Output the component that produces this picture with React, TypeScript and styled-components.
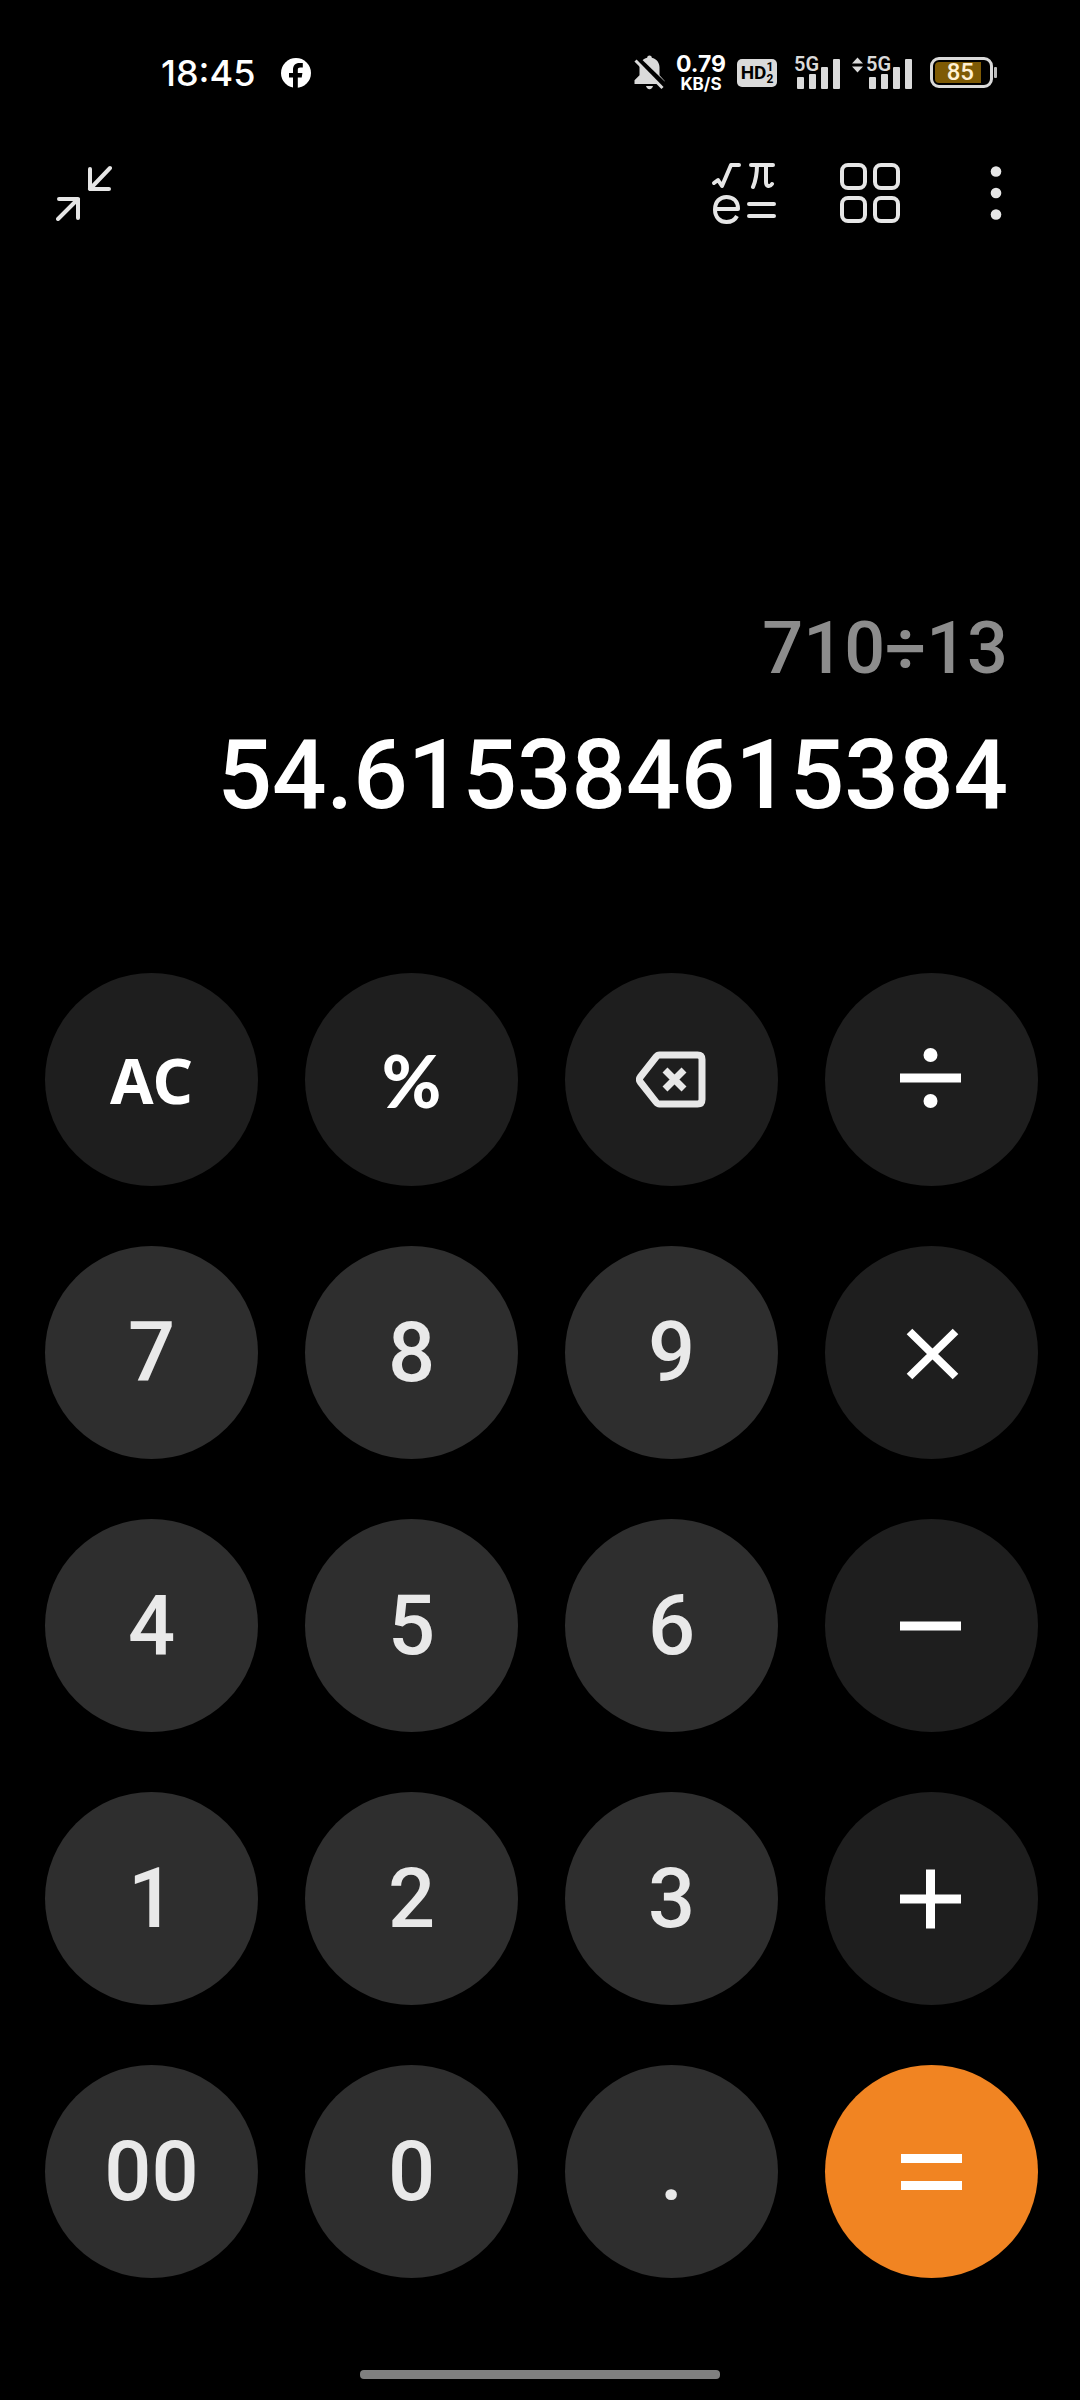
import React from 'react';
import styled, { createGlobalStyle } from 'styled-components';

const GlobalStyle = createGlobalStyle`
  *, *::before, *::after { box-sizing: border-box; }
  body {
    margin: 0;
    background: #000;
    color: #fff;
    font-family: Roboto, "Noto Sans", sans-serif;
  }
`;

const Screen = styled.div`
  display: flex;
  flex-direction: column;
  min-height: 100vh;
`;

const StatusBar = styled.header`
  display: flex;
  align-items: center;
  justify-content: space-between;
  height: 143px;
  padding: 2px 83px 0 161px;
  font-family: Inter, sans-serif;
`;

const StatusGroup = styled.div<{ $gap: number }>`
  display: flex;
  align-items: center;
  gap: ${(p) => p.$gap}px;
`;

const Clock = styled.time`
  font-size: 36px;
  line-height: 44px;
  font-weight: 500;
`;

const NetSpeed = styled.div`
  display: flex;
  flex-direction: column;
  align-items: center;
  width: 50px;
  font-weight: 700;
  font-size: 23px;
  line-height: 22px;
`;

const SpeedUnit = styled.span`
  font-size: 17px;
  line-height: 18px;
`;

const HdBadge = styled.div`
  display: flex;
  align-items: center;
  justify-content: center;
  width: 40px;
  height: 28px;
  border-radius: 5px;
  background: #dadada;
  color: #000;
  font: 700 19px/28px Roboto, sans-serif;
`;

const SimNumbers = styled.span`
  display: flex;
  flex-direction: column;
  font-size: 12px;
  line-height: 12px;
`;

const Battery = styled.div`
  display: flex;
  align-items: center;
  gap: 1px;
`;

const BatteryBody = styled.div`
  display: flex;
  width: 63px;
  height: 31px;
  padding: 2px;
  border: 3px solid #dadada;
  border-radius: 9px;
`;

const BatteryLevel = styled.div`
  display: flex;
  align-items: center;
  justify-content: flex-end;
  width: 46px;
  padding-right: 7px;
  border-radius: 4px 0 0 4px;
  background: #7e5a05;
  color: #fff0d4;
  font: 500 24px/21px Roboto, sans-serif;
`;

const BatteryTip = styled.div`
  width: 3px;
  height: 11px;
  border-radius: 1px;
  background: #bdbdbd;
`;

const Toolbar = styled.nav`
  display: flex;
  align-items: center;
  justify-content: space-between;
  height: 100px;
  padding: 0 34px;
`;

const ToolGroup = styled.div`
  display: flex;
  gap: 26px;
`;

const ToolButton = styled.button`
  display: flex;
  align-items: center;
  justify-content: center;
  width: 100px;
  height: 100px;
  padding: 0;
  border: 0;
  background: none;
  color: #e6e6e6;
`;

const Display = styled.main`
  display: flex;
  flex: 1;
  flex-direction: column;
  align-items: flex-end;
  justify-content: flex-end;
  gap: 28px;
  padding: 0 72px 142px;
  font-weight: 500;
`;

const Expression = styled.div`
  font-size: 72px;
  line-height: 84px;
  color: #8c8c8c;
`;

const Result = styled.output`
  font-size: 96px;
  line-height: 112px;
`;

const Keypad = styled.section`
  display: grid;
  grid-template-columns: repeat(4, 1fr);
  gap: 60px 47px;
  padding: 0 42px 0 45px;
`;

type Tone = 'digit' | 'operator' | 'equals';

const toneFill: Record<Tone, string> = {
  digit: '#2e2e2e',
  operator: '#1e1e1e',
  equals: '#f18422',
};

const Key = styled.button<{ $tone: Tone }>`
  display: flex;
  align-items: center;
  justify-content: center;
  aspect-ratio: 1;
  padding: 0;
  border: 0;
  border-radius: 50%;
  background: ${(p) => toneFill[p.$tone]};
  color: ${(p) => (p.$tone === 'digit' ? '#e9e9e9' : '#fff')};
  font: 500 83px/96px Roboto, sans-serif;
`;

const ClearLabel = styled.span`
  font: 700 63px/86px "Noto Sans", sans-serif;
`;

const PercentLabel = styled.span`
  font: 900 72px/86px Lato, sans-serif;
`;

const HomeArea = styled.footer`
  display: flex;
  justify-content: center;
  padding: 92px 0 21px;
`;

const HomeBar = styled.div`
  width: 33.333%;
  height: 9px;
  border-radius: 4px;
  background: #808080;
`;

function FacebookIcon() {
  return (
    <svg width="30" height="30" viewBox="0 0 30 30" aria-hidden="true">
      <circle cx="15" cy="15" r="15" fill="#fff" />
      <path
        d="M12 30V19.5H8V15h4v-3.2C12 7.500 14.300 5 18.500 5h3.300v4.500h-2.600c-1.700 0-2.400.8-2.400 2.300V15h4.600l-.7 4.500h-3.900V30z"
        fill="#000"
      />
    </svg>
  );
}

function MutedBellIcon() {
  return (
    <svg width="31" height="35" viewBox="0 0 31 35" aria-hidden="true">
      <path
        d="M15.500 0.500c1.500 0 2.300 1 2.300 2.200 4.600 1 7.700 4.800 7.700 9.500v8l5 5.500v3.300H0.500V25.200l5-5v-8c0-4.700 3.100-8.500 7.700-9.500 0-1.200.8-2.200 2.300-2.200z"
        fill="#dadada"
      />
      <path d="M12 31h7c-.4 2-1.800 3.200-3.500 3.200S12.400 33 12 31z" fill="#dadada" />
      <path d="M3 4L31 31" stroke="#000" strokeWidth="6" />
      <path d="M1.500 5.500L28.500 33" stroke="#dadada" strokeWidth="3" />
    </svg>
  );
}

function SignalIcon({ active }: { active?: boolean }) {
  const x = active ? 14 : 0;
  return (
    <svg width={x + 47} height="42" viewBox={`0 -4 ${x + 47} 42`} role="img" aria-label="5G signal">
      {active && <path d="M0 7.500L5.500 1.500L11 7.500zM0 10.500h11L5.500 16.500z" fill="#dadada" />}
      <text x={x} y="15" fontFamily="Roboto, sans-serif" fontSize="20" fontWeight="600" fill="#dadada">
        5G
      </text>
      <g transform={`translate(${x} 0)`} fill="#dadada">
        <rect x="3" y="21" width="7" height="12" rx="1" />
        <rect x="15" y="18" width="7" height="15" rx="1" />
        <rect x="27" y="11" width="7" height="22" rx="1" />
        <rect x="39" y="3" width="7" height="30" rx="1" />
      </g>
    </svg>
  );
}

function ShrinkIcon() {
  return (
    <svg width="56" height="56" viewBox="0 0 56 56" fill="none" stroke="currentColor" strokeWidth="4" strokeLinecap="round" strokeLinejoin="round">
      <path d="M34 4v20h19M34 24L54 3" />
      <path d="M3 34h19v19M22 34L2 54" />
    </svg>
  );
}

function FormulaIcon() {
  return (
    <svg width="66" height="62" viewBox="0 0 66 62" fill="none" stroke="currentColor" strokeWidth="4" strokeLinecap="round" strokeLinejoin="round">
      <path d="M3 21l4-3 4 6L20 3h8" />
      <path d="M40 3h22M46 3c0 8-1 15-4 22M55 3v17c0 5 4 5 6 2" />
      <path d="M4 47h23c0-8-5-12-11.500-12S4 39.500 4 47.500s5 12.500 11.500 12.500c5 0 8.500-2 10.500-6" strokeLinecap="butt" />
      <path d="M38 42h25M38 54h25" />
    </svg>
  );
}

function GridIcon() {
  return (
    <svg width="60" height="60" viewBox="0 0 60 60" fill="none" stroke="currentColor" strokeWidth="4">
      <rect x="2" y="2" width="23" height="23" rx="6" />
      <rect x="35" y="2" width="23" height="23" rx="6" />
      <rect x="2" y="35" width="23" height="23" rx="6" />
      <rect x="35" y="35" width="23" height="23" rx="6" />
    </svg>
  );
}

function MoreIcon() {
  return (
    <svg width="12" height="54" viewBox="0 0 12 54" fill="currentColor">
      <circle cx="6" cy="5.500" r="5.300" />
      <circle cx="6" cy="27" r="5.300" />
      <circle cx="6" cy="48.500" r="5.300" />
    </svg>
  );
}

function BackspaceIcon() {
  return (
    <svg width="72" height="58" viewBox="1.500 0.500 72 58" fill="none" stroke="#e8e8e8" strokeWidth="7" strokeLinejoin="round">
      <path d="M25 4.500H63q4.500 0 4.500 4.500V49q0 4.500-4.500 4.500H25Q23 53.500 21.500 51.500L5.800 31.500Q4 29 5.800 26.500L21.500 6.500Q23 4.500 25 4.500z" />
      <path d="M30.500 19.500l19 19M49.500 19.500l-19 19" />
    </svg>
  );
}

const operatorPaths = {
  divide: 'M0 30h61',
  multiply: 'M9.500 10.500l46 45M55.500 10.500L9.500 55.500',
  minus: 'M0 32h61',
  plus: 'M0 32h61M30.500 2.500v59',
  equals: 'M1 18.500h61M1 45.500h61',
};

function OperatorIcon({ name }: { name: keyof typeof operatorPaths }) {
  return (
    <svg width="64" height="64" viewBox="0 0 64 64" fill="none" stroke="currentColor" strokeWidth={name === 'multiply' ? 8 : 9}>
      <path d={operatorPaths[name]} />
      {name === 'divide' && (
        <g fill="currentColor" stroke="none">
          <circle cx="30.500" cy="7" r="7" />
          <circle cx="30.500" cy="53" r="7" />
        </g>
      )}
    </svg>
  );
}

interface KeySpec {
  label: string;
  tone: Tone;
  face?: React.ReactNode;
}

const digit = (label: string): KeySpec => ({ label, tone: 'digit' });

const operator = (label: string, name: keyof typeof operatorPaths): KeySpec => ({
  label,
  tone: name === 'equals' ? 'equals' : 'operator',
  face: <OperatorIcon name={name} />,
});

const keys: KeySpec[] = [
  { label: 'All clear', tone: 'operator', face: <ClearLabel>AC</ClearLabel> },
  { label: 'Percent', tone: 'operator', face: <PercentLabel>%</PercentLabel> },
  { label: 'Backspace', tone: 'operator', face: <BackspaceIcon /> },
  operator('Divide', 'divide'),
  digit('7'),
  digit('8'),
  digit('9'),
  operator('Multiply', 'multiply'),
  digit('4'),
  digit('5'),
  digit('6'),
  operator('Subtract', 'minus'),
  digit('1'),
  digit('2'),
  digit('3'),
  operator('Add', 'plus'),
  digit('00'),
  digit('0'),
  digit('.'),
  operator('Equals', 'equals'),
];

export default function App() {
  return (
    <>
      <GlobalStyle />
      <Screen>
        <StatusBar>
          <StatusGroup $gap={26}>
            <Clock>18:45</Clock>
            <FacebookIcon />
          </StatusGroup>
          <StatusGroup $gap={17}>
            <StatusGroup $gap={11}>
              <MutedBellIcon />
              <NetSpeed>
                <span>0.79</span>
                <SpeedUnit>KB/S</SpeedUnit>
              </NetSpeed>
              <HdBadge>
                HD
                <SimNumbers>
                  <span>1</span>
                  <span>2</span>
                </SimNumbers>
              </HdBadge>
            </StatusGroup>
            <StatusGroup $gap={11}>
              <SignalIcon />
              <SignalIcon active />
            </StatusGroup>
            <Battery>
              <BatteryBody>
                <BatteryLevel>85</BatteryLevel>
              </BatteryBody>
              <BatteryTip />
            </Battery>
          </StatusGroup>
        </StatusBar>
        <Toolbar>
          <ToolButton aria-label="Shrink window">
            <ShrinkIcon />
          </ToolButton>
          <ToolGroup>
            <ToolButton aria-label="Scientific mode">
              <FormulaIcon />
            </ToolButton>
            <ToolButton aria-label="Converters">
              <GridIcon />
            </ToolButton>
            <ToolButton aria-label="More options">
              <MoreIcon />
            </ToolButton>
          </ToolGroup>
        </Toolbar>
        <Display>
          <Expression>710÷13</Expression>
          <Result>54.615384615384</Result>
        </Display>
        <Keypad aria-label="Keypad">
          {keys.map((k) => (
            <Key key={k.label} type="button" $tone={k.tone} aria-label={k.label}>
              {k.face ?? k.label}
            </Key>
          ))}
        </Keypad>
        <HomeArea>
          <HomeBar />
        </HomeArea>
      </Screen>
    </>
  );
}
